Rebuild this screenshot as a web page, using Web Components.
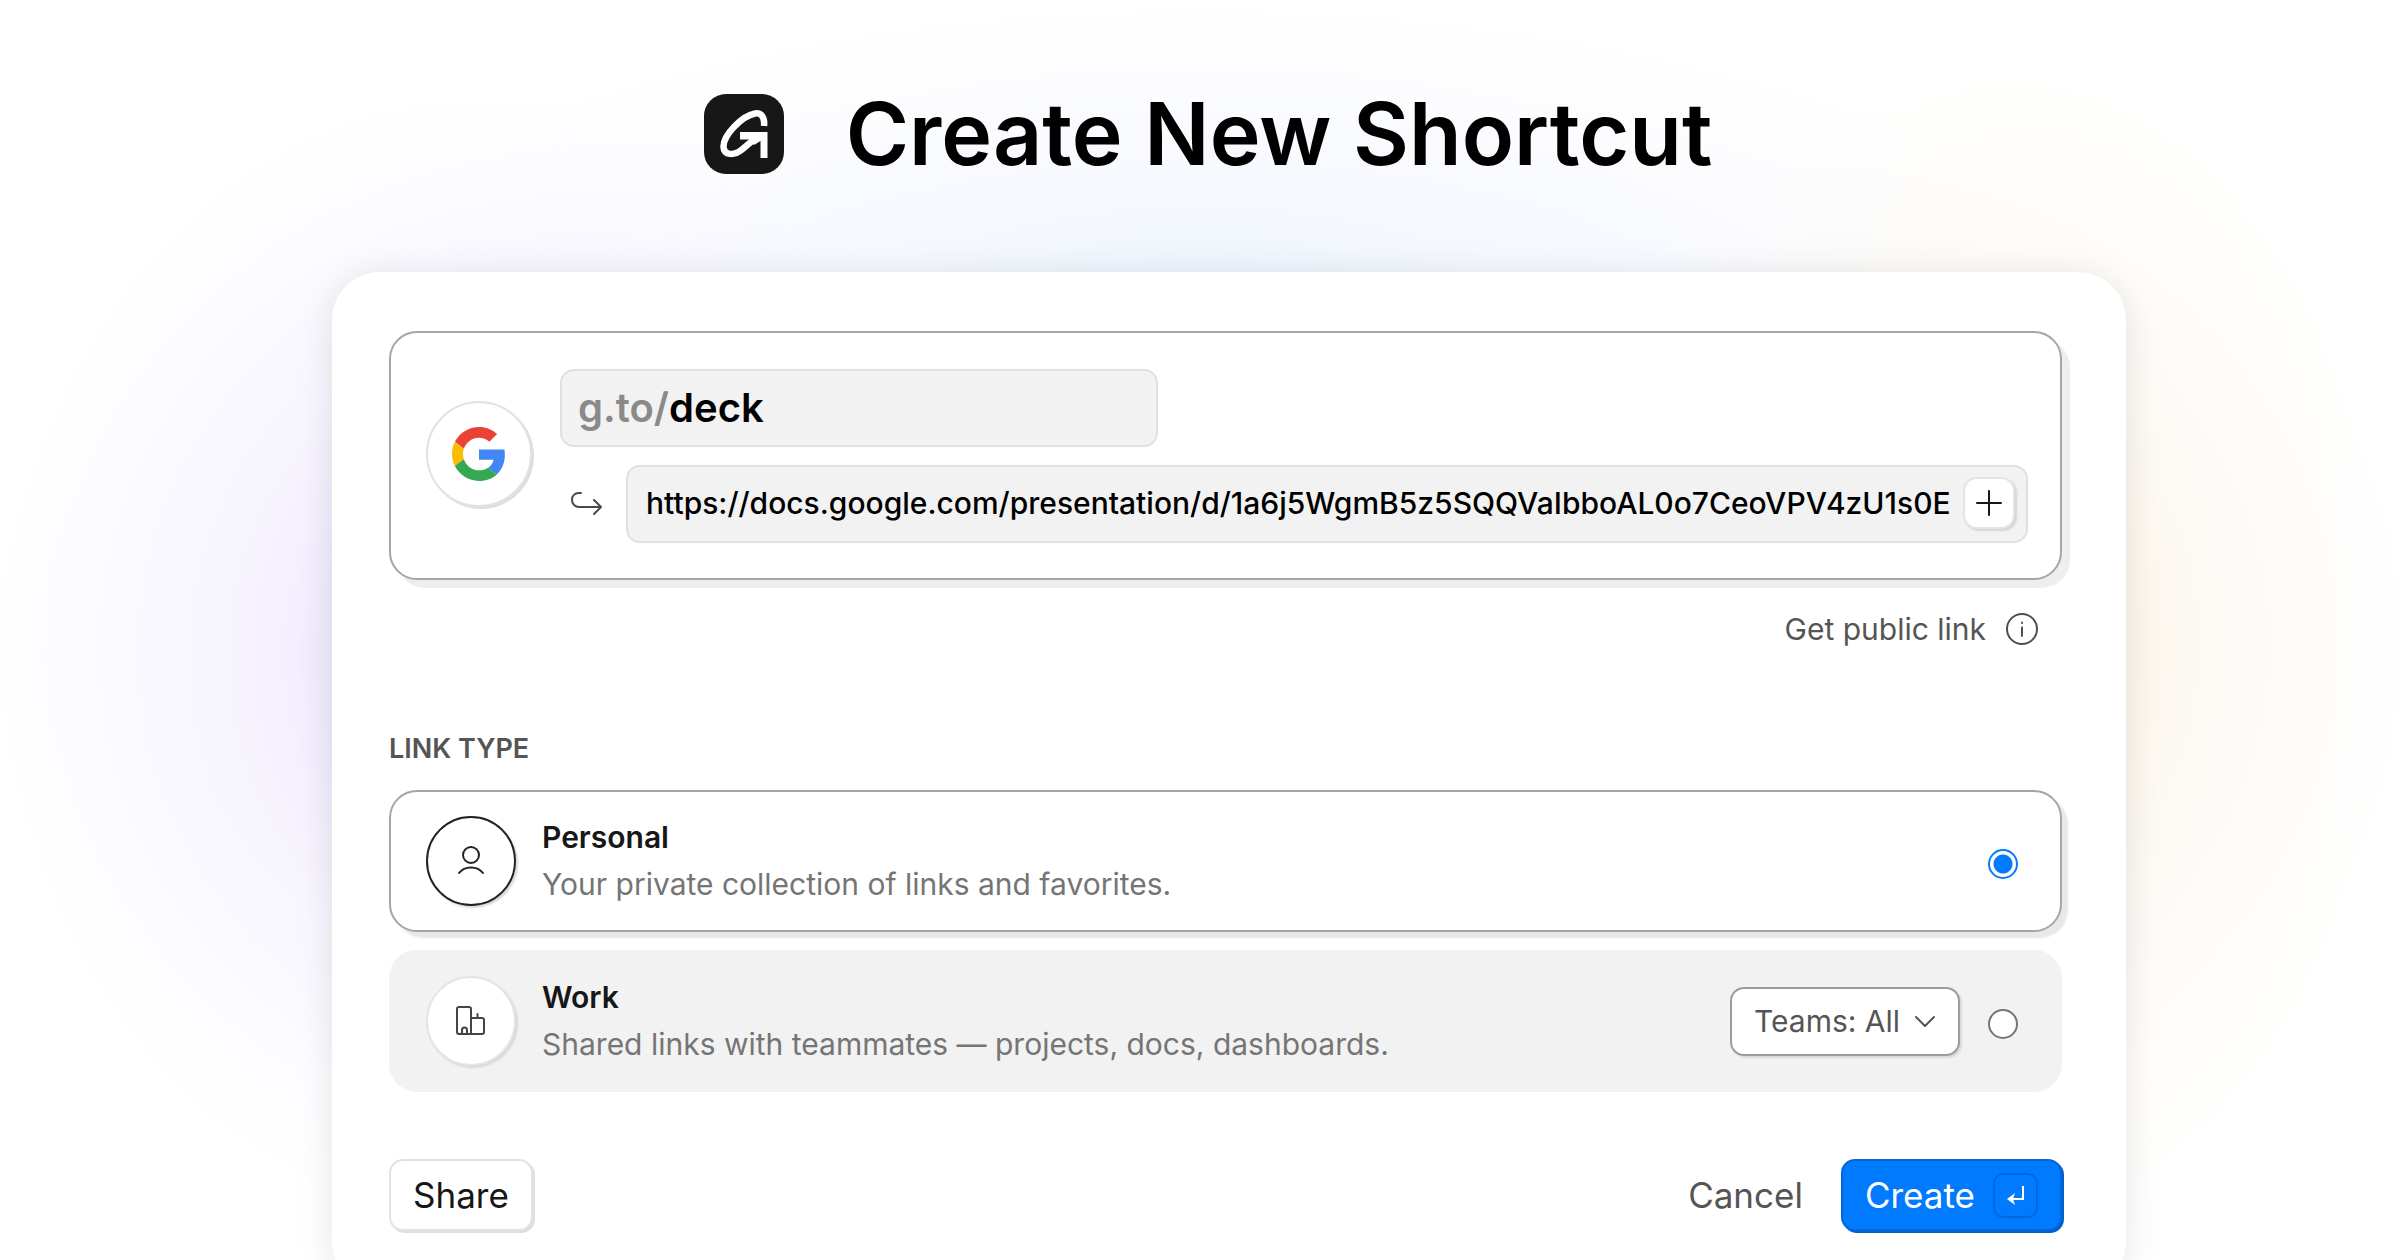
<!DOCTYPE html>
<html lang="en">
<head>
<meta charset="utf-8">
<title>Create New Shortcut</title>
<style>
  html {
    height: 100%;
    overflow: hidden;
  }

  body {
    margin: 0;
    min-height: 100%;
    font-family: Inter, Roboto, sans-serif;
    color: #171717;
    background: #fff;
  }
</style>
</head>
<body>
<shortcut-page>
  <page-title slot="header">Create New Shortcut</page-title>
  <shortcut-dialog>
    <link-target></link-target>
    <public-link>Get public link</public-link>
    <link-types></link-types>
    <dialog-actions></dialog-actions>
  </shortcut-dialog>
</shortcut-page>

<script>
// page background and column
class ShortcutPage extends HTMLElement {
  constructor() {
    super();
    this.attachShadow({ mode: 'open' });
  }

  connectedCallback() {
    this.shadowRoot.innerHTML = `
      <style>
        :host {
          display: block;
          min-height: 100vh;
          box-sizing: border-box;
          padding: 94px 274px 0 332px;
          background:
            radial-gradient(27% 28% at 50% 32%, rgba(200, 235, 252, .4), rgba(200, 232, 252, .1) 55%, rgba(190, 222, 255, 0)),
            radial-gradient(20% 44% at 20% 51%, rgba(212, 190, 250, .42), rgba(222, 205, 250, .14) 55%, rgba(225, 205, 250, 0)),
            radial-gradient(16% 46% at 84% 50%, rgba(255, 240, 200, .5), rgba(255, 240, 200, .16) 55%, rgba(255, 240, 200, 0)),
            radial-gradient(51% 50% at 50% 50%, rgba(226, 226, 250, .32) 40%, rgba(235, 235, 252, .22) 75%, rgba(240, 240, 255, 0)),
            #fff;
        }
      </style>
      <slot name="header"></slot>
      <slot></slot>
    `;
  }
}

class PageTitle extends HTMLElement {
  constructor() {
    super();
    this.attachShadow({ mode: 'open' });
  }

  connectedCallback() {
    this.shadowRoot.innerHTML = `
      <style>
        :host {
          display: flex;
          align-items: center;
          justify-content: center;
          gap: 62px;
          padding-right: 42px;
          margin-bottom: 98px;
        }

        svg {
          width: 80px;
          height: 80px;
          flex: none;
        }

        h1 {
          margin: 0;
          font-size: 86px;
          line-height: 80px;
          font-weight: 600;
          color: #000;
        }
      </style>
      <svg viewBox="0 0 80 80" aria-hidden="true">
        <rect width="80" height="80" rx="22" fill="#171717"/>
        <path d="M60 32 C61 23 57 18.500 51 19.500 C38 22 19 41 19.500 53 C20 61.500 30 62 38 55.500 L54 42" fill="none" stroke="#fff" stroke-width="6.500"/>
        <path d="M36 38 H63.500 V64 H56.500 V47 L50 51 L45 45.500 H36 Z" fill="#fff"/>
      </svg>
      <h1><slot></slot></h1>
    `;
  }
}

class ShortcutDialog extends HTMLElement {
  constructor() {
    super();
    this.attachShadow({ mode: 'open' });
  }

  connectedCallback() {
    this.shadowRoot.innerHTML = `
      <style>
        :host {
          display: flex;
          flex-direction: column;
          padding: 59px 64px 59px 57px;
          background: #fff;
          border-radius: 48px;
          box-shadow: 0 4px 36px rgba(0, 0, 0, .1);
        }
      </style>
      <slot></slot>
    `;
  }
}

// favicon, short name and destination url
class LinkTarget extends HTMLElement {
  constructor() {
    super();
    this.attachShadow({ mode: 'open' });
  }

  connectedCallback() {
    this.shadowRoot.innerHTML = `
      <style>
        :host {
          display: flex;
          align-items: center;
          gap: 28px;
          padding: 36px 32px 35px 35px;
          border: 2px solid #a6a6a6;
          border-radius: 28px;
          background: #fff;
          box-shadow: 8px 8px 0 #eee;
        }

        .favicon {
          display: grid;
          place-items: center;
          flex: none;
          box-sizing: border-box;
          width: 106px;
          height: 106px;
          margin-bottom: 4px;
          border: 2px solid #e2e2e2;
          border-radius: 50%;
          background: #fff;
          box-shadow: 2px 2px 0 #dedede;
        }

        .favicon svg {
          width: 54px;
          height: 54px;
        }

        .fields {
          flex: 1;
          min-width: 0;
          display: grid;
          gap: 18px;
        }

        .field {
          display: flex;
          align-items: center;
          box-sizing: border-box;
          height: 78px;
          padding-bottom: 2px;
          border: 2px solid #e0e0e0;
          border-radius: 14px;
          background: #f2f2f2;
        }

        .slug {
          width: 598px;
          padding-left: 16px;
          font-size: 40px;
          font-weight: 600;
        }

        .slug label {
          color: #8a8a8a;
        }

        input {
          flex: 1;
          min-width: 0;
          padding: 0;
          border: 0;
          outline: 0;
          background: none;
          font: inherit;
          color: #000;
        }

        .destination {
          display: flex;
          align-items: center;
          gap: 22px;
          padding-left: 8px;
        }

        .arrow {
          width: 36px;
          height: 30px;
          flex: none;
        }

        .url {
          flex: 1;
          min-width: 0;
          gap: 6px;
          padding-left: 18px;
          padding-right: 11px;
          font-size: 30px;
          font-weight: 500;
        }

        button {
          display: grid;
          place-items: center;
          flex: none;
          width: 52px;
          height: 52px;
          padding: 0;
          border: 2px solid #e4e4e4;
          border-radius: 14px;
          background: #fff;
          box-shadow: 2px 2px 2px #d4d4d4;
        }

        button svg {
          width: 28px;
          height: 28px;
        }
      </style>
      <div class="favicon">
        <svg viewBox="0 0 48 48" aria-hidden="true">
          <path fill="#EA4335" d="M24 9.500c3.540 0 6.710 1.220 9.210 3.600l6.850-6.850C35.900 2.380 30.470 0 24 0 14.620 0 6.510 5.380 2.560 13.220l7.980 6.190C12.430 13.720 17.740 9.500 24 9.500z"/>
          <path fill="#4285F4" d="M46.980 24.550c0-1.570-.150-3.090-.380-4.550H24v9.020h12.940c-.580 2.960-2.260 5.480-4.780 7.180l7.730 6c4.510-4.180 7.090-10.360 7.090-17.650z"/>
          <path fill="#FBBC05" d="M10.530 28.590c-.480-1.450-.760-2.990-.760-4.590s.270-3.140.760-4.590l-7.980-6.190C.920 16.460 0 20.120 0 24c0 3.880.920 7.540 2.560 10.780l7.970-6.190z"/>
          <path fill="#34A853" d="M24 48c6.480 0 11.930-2.130 15.890-5.810l-7.730-6c-2.150 1.450-4.920 2.300-8.160 2.300-6.260 0-11.570-4.220-13.470-9.910l-7.980 6.190C6.510 42.620 14.620 48 24 48z"/>
        </svg>
      </div>
      <div class="fields">
        <div class="field slug">
          <label for="slug">g.to/</label>
          <input id="slug" type="text" value="deck" spellcheck="false">
        </div>
        <div class="destination">
          <svg class="arrow" viewBox="0 0 36 30" fill="none" stroke="#4a4a4a" stroke-width="2" stroke-linecap="round" stroke-linejoin="round" aria-hidden="true">
            <path d="M13 4H10.500A6.500 6.500 0 0 0 4 10.500V11A7 7 0 0 0 11 18H33M26 11L33 18L26 25"/>
          </svg>
          <div class="field url">
            <input type="text" aria-label="Destination URL" spellcheck="false" value="https://docs.google.com/presentation/d/1a6j5WgmB5z5SQQVaIbboAL0o7CeoVPV4zU1s0E">
            <button type="button" aria-label="Add">
              <svg viewBox="0 0 28 28" stroke="#171717" stroke-width="2" stroke-linecap="round" aria-hidden="true">
                <path d="M14 2V26M2 14H26"/>
              </svg>
            </button>
          </div>
        </div>
      </div>
    `;
  }
}

class PublicLink extends HTMLElement {
  constructor() {
    super();
    this.attachShadow({ mode: 'open' });
  }

  connectedCallback() {
    this.shadowRoot.innerHTML = `
      <style>
        :host {
          display: flex;
          justify-content: flex-end;
          padding: 31px 24px 0 0;
        }

        a {
          display: flex;
          align-items: center;
          gap: 20px;
          font-size: 30px;
          line-height: 36px;
          color: #555;
          text-decoration: none;
        }

        svg {
          width: 32px;
          height: 32px;
        }
      </style>
      <a href="#public"><slot></slot>
        <svg viewBox="0 0 32 32" fill="none" stroke="#4f4f4f" stroke-width="2" stroke-linecap="round" aria-hidden="true">
          <circle cx="16" cy="16" r="15"/>
          <path d="M16 14.500V23M16 9.500V10"/>
        </svg>
      </a>
    `;
  }
}

class LinkTypes extends HTMLElement {
  constructor() {
    super();
    this.attachShadow({ mode: 'open' });
  }

  connectedCallback() {
    this.shadowRoot.innerHTML = `
      <style>
        :host {
          display: block;
          padding-top: 84px;
        }

        fieldset {
          display: grid;
          gap: 18px;
          margin: 0;
          padding: 0;
          border: 0;
        }

        legend {
          padding: 0 0 23px;
          font-size: 27px;
          line-height: 36px;
          font-weight: 600;
          color: #555;
        }

        .option {
          display: flex;
          align-items: center;
          box-sizing: border-box;
          height: 142px;
          padding: 0 42px 0 35px;
          border: 2px solid #f2f2f2;
          border-radius: 28px;
          background: #f2f2f2;
        }

        .option.selected {
          border-color: #a6a6a6;
          background: #fff;
          box-shadow: 6px 6px 2px #e8e8e8;
        }

        .badge {
          display: grid;
          place-items: center;
          flex: none;
          box-sizing: border-box;
          width: 90px;
          height: 90px;
          margin-right: 26px;
          border: 2px solid #e4e4e4;
          border-radius: 50%;
          background: #fff;
          box-shadow: 2px 2px 2px #d8d8d8;
        }

        .selected .badge {
          border-color: #222;
        }

        .badge svg {
          width: 32px;
          height: 32px;
        }

        label {
          flex: 1;
          font-size: 30px;
          line-height: 47px;
          color: #757575;
        }

        label b {
          display: block;
          font-weight: 600;
          color: #171717;
        }

        input {
          appearance: none;
          flex: none;
          box-sizing: border-box;
          width: 30px;
          height: 30px;
          margin: 6px 0 0;
          border: 2px solid #757575;
          border-radius: 50%;
          background: #fff;
        }

        input:checked {
          border-color: #0a7aff;
          background: radial-gradient(circle, #007aff 9px, #fff 10px);
        }

        .teams {
          display: grid;
          align-items: center;
          margin-right: 28px;
        }

        .teams > * {
          grid-area: 1 / 1;
        }

        select {
          appearance: none;
          height: 69px;
          padding: 0 57px 0 22px;
          border: 2px solid #9c9c9c;
          border-radius: 14px;
          background: #fff;
          box-shadow: 2px 2px 2px #d8d8d8;
          font: inherit;
          font-size: 30px;
          color: #555;
        }

        .teams svg {
          justify-self: end;
          width: 24px;
          height: 24px;
          margin-right: 23px;
          pointer-events: none;
        }
      </style>
      <fieldset>
        <legend>LINK TYPE</legend>
        <div class="option selected">
          <span class="badge">
            <svg viewBox="0 0 32 32" fill="none" stroke="#222" stroke-width="2" stroke-linecap="round" aria-hidden="true">
              <circle cx="16" cy="10" r="8"/>
              <path d="M4 28C9.500 20.500 22.500 20.500 28 28"/>
            </svg>
          </span>
          <label for="personal"><b>Personal</b>Your private collection of links and favorites.</label>
          <input id="personal" type="radio" name="type" checked>
        </div>
        <div class="option">
          <span class="badge">
            <svg viewBox="0 0 32 32" fill="none" stroke="#444" stroke-width="2" stroke-linecap="round" stroke-linejoin="round" aria-hidden="true">
              <path d="M16 29H4Q2 29 2 27V4Q2 2 4 2H14Q16 2 16 4V29H27Q29 29 29 27V15Q29 13 27 13H16M22.500 13V9M7 29V25Q7 22.500 9.500 22.500T12 25V29"/>
            </svg>
          </span>
          <label for="work"><b>Work</b>Shared links with teammates — projects, docs, dashboards.</label>
          <div class="teams">
            <select aria-label="Teams"><option>Teams: All</option></select>
            <svg viewBox="0 0 24 24" fill="none" stroke="#555" stroke-width="2" stroke-linecap="round" stroke-linejoin="round" aria-hidden="true">
              <path d="M3 8L12 17L21 8"/>
            </svg>
          </div>
          <input id="work" type="radio" name="type">
        </div>
      </fieldset>
    `;
  }
}

class DialogActions extends HTMLElement {
  constructor() {
    super();
    this.attachShadow({ mode: 'open' });
  }

  connectedCallback() {
    this.shadowRoot.innerHTML = `
      <style>
        :host {
          display: flex;
          align-items: center;
          padding-top: 67px;
        }

        button {
          display: flex;
          align-items: center;
          box-sizing: border-box;
          height: 72px;
          padding: 0 22px;
          border: 2px solid transparent;
          border-radius: 14px;
          background: none;
          font: inherit;
          font-size: 35px;
          color: #171717;
        }

        .share {
          border-color: #e2e2e2;
          background: #fff;
          box-shadow: 2px 2px 0 #dedede;
        }

        .cancel {
          margin-left: auto;
          padding: 0 36px;
          color: #555;
        }

        .create {
          gap: 18px;
          border-color: #0068dc;
          background: #007aff;
          box-shadow: 2px 2px 0 #005fc8;
          color: #fff;
        }

        .key {
          display: grid;
          place-items: center;
          box-sizing: border-box;
          width: 45px;
          height: 45px;
          border: 2px solid #0068dc;
          border-radius: 10px;
        }

        .key svg {
          width: 20px;
          height: 22px;
        }
      </style>
      <button type="button" class="share">Share</button>
      <button type="button" class="cancel">Cancel</button>
      <button type="submit" class="create">Create
        <span class="key">
          <svg viewBox="0 0 20 22" aria-hidden="true">
            <path d="M17 2V15H6" fill="none" stroke="#fff" stroke-width="2"/>
            <path d="M1 15L9 9L7 15L9 21Z" fill="#fff"/>
          </svg>
        </span>
      </button>
    `;
  }
}

customElements.define('shortcut-page', ShortcutPage);
customElements.define('page-title', PageTitle);
customElements.define('shortcut-dialog', ShortcutDialog);
customElements.define('link-target', LinkTarget);
customElements.define('public-link', PublicLink);
customElements.define('link-types', LinkTypes);
customElements.define('dialog-actions', DialogActions);
</script>
</body>
</html>
